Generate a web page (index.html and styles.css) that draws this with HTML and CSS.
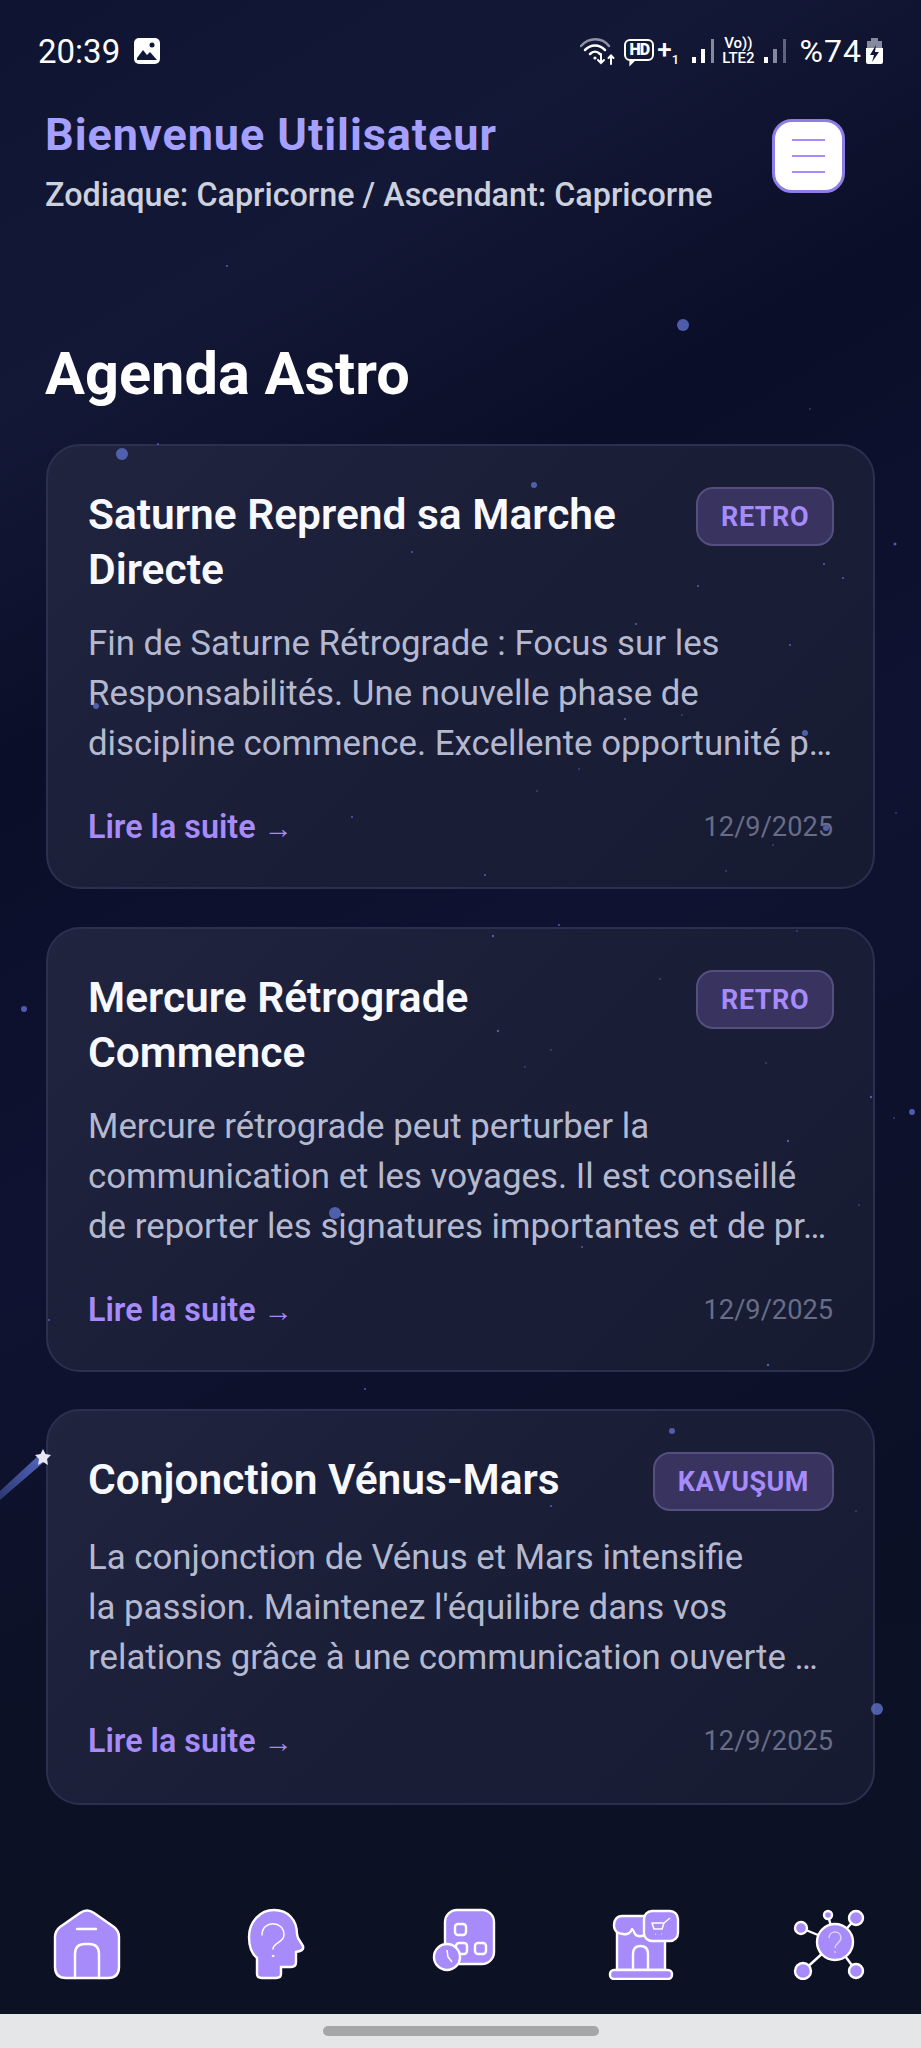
FILE: index.html
```html
<!DOCTYPE html>
<html lang="fr">
<head>
    <meta charset="UTF-8">
    <meta name="viewport" content="width=device-width, initial-scale=1.0">
    <title>Agenda Astro</title>
    <link rel="stylesheet" href="styles.css">
</head>
<body>

<div class="app">

    <div class="status-bar">
        <div class="status-left">
            <span class="clock">20:39</span>
            <svg class="gallery-icon" width="28" height="28" viewBox="0 0 28 28">
                <rect x="1" y="1" width="26" height="26" rx="5" fill="#fff"/>
                <path d="M4 21l6-8 4 5 3-3 7 8H4z" fill="#10153a"/>
                <circle cx="19" cy="8" r="2.5" fill="#10153a"/>
            </svg>
        </div>
        <div class="status-right">
            <svg width="36" height="28" viewBox="0 0 36 28" fill="none" stroke="#fff" stroke-linecap="round">
                <path d="M1 9C9 0 22 0 29 9" stroke="#8f93a5" stroke-width="2.5"/>
                <path d="M5 13C11 7 19 7 25 13" stroke-width="2.5"/>
                <path d="M10 17C13 14 17 14 20 17" stroke-width="2.5"/>
                <circle cx="15" cy="21" r="1.6" fill="#fff" stroke="none"/>
                <path d="M21 17v9M18 23l3 3 3-3" stroke-width="2"/>
                <path d="M31 27v-8M28.500 21l2.500-2.500 2.500 2.500" stroke-width="2"/>
            </svg>
            <span class="hd-box">HD</span>
            <span class="hd-plus">+<sub>1</sub></span>
            <svg class="signal" width="25" height="26" viewBox="0 0 25 26">
                <rect x="1" y="19" width="4" height="6" fill="#fff"/>
                <rect x="10" y="11" width="4" height="14" fill="#fff"/>
                <rect x="20" y="1" width="3" height="24" fill="#858a9e"/>
            </svg>
            <span class="volte">Vo))<br>LTE2</span>
            <svg class="signal" width="25" height="26" viewBox="0 0 25 26">
                <rect x="1" y="19" width="4" height="6" fill="#fff"/>
                <rect x="10" y="11" width="4" height="14" fill="#858a9e"/>
                <rect x="20" y="1" width="3" height="24" fill="#5f647c"/>
            </svg>
            <span class="battery-text">%74</span>
            <svg width="19" height="28" viewBox="0 0 19 28">
                <path d="M6 1h7v3H6zM2 4h15v8H2z" fill="#858a9e"/>
                <path d="M1 11h17v14a2 2 0 0 1-2 2H3a2 2 0 0 1-2-2z" fill="#fff"/>
                <path d="M11 8l-6 10h4l-2 7 7-10h-4z" fill="#10153a"/>
            </svg>
        </div>
    </div>

    <header class="top-header">
        <div>
            <h2 class="welcome">Bienvenue Utilisateur</h2>
            <p class="sign-line">Zodiaque: Capricorne / Ascendant: Capricorne</p>
        </div>
        <button class="menu-btn" type="button">
            <span></span>
            <span></span>
            <span></span>
        </button>
    </header>

    <main class="content">
        <h1 class="page-title">Agenda Astro</h1>

        <article class="card">
            <div class="card-head">
                <h3>Saturne Reprend sa Marche Directe</h3>
                <span class="badge">RETRO</span>
            </div>
            <p class="card-text">Fin de Saturne Rétrograde : Focus sur les Responsabilités. Une nouvelle phase de discipline commence. Excellente opportunité p…</p>
            <div class="card-foot">
                <a class="read-more" href="#">Lire la suite <span class="arrow">→</span></a>
                <span class="date">12/9/2025</span>
            </div>
        </article>

        <article class="card">
            <div class="card-head">
                <h3>Mercure Rétrograde Commence</h3>
                <span class="badge">RETRO</span>
            </div>
            <p class="card-text">Mercure rétrograde peut perturber la communication et les voyages. Il est conseillé de reporter les signatures importantes et de pr…</p>
            <div class="card-foot">
                <a class="read-more" href="#">Lire la suite <span class="arrow">→</span></a>
                <span class="date">12/9/2025</span>
            </div>
        </article>

        <article class="card">
            <div class="card-head">
                <h3>Conjonction Vénus-Mars</h3>
                <span class="badge">KAVUŞUM</span>
            </div>
            <p class="card-text">La conjonction de Vénus et Mars intensifie<br>la passion. Maintenez l'équilibre dans vos relations grâce à une communication ouverte …</p>
            <div class="card-foot">
                <a class="read-more" href="#">Lire la suite <span class="arrow">→</span></a>
                <span class="date">12/9/2025</span>
            </div>
        </article>
    </main>

    <nav class="bottom-nav">
        <a href="#">
            <svg width="80" height="72" viewBox="0 0 80 72" fill="#a78bfa" stroke="#fff" stroke-width="2.400" stroke-linecap="round">
                <path d="M28 5Q35 0 42 5L62 19Q67 23 67 29V59Q67 70 56 70H14Q3 70 3 59V29Q3 23 8 19Z"/>
                <path d="M25 21H44" fill="none"/>
                <path d="M23 70V46Q23 36 33 36H37Q47 36 47 46V70" fill="none"/>
            </svg>
        </a>
        <a href="#">
            <svg width="80" height="72" viewBox="0 0 80 72" fill="#a78bfa" stroke="#fff" stroke-width="2.400" stroke-linecap="round">
                <path d="M21 50C15 45 13 36 13 29C13 14 24 2 38 2C52 2 61 12 61 26L62 30L67 38Q68 42 64 43L60 44V54Q60 59 55 59H45V66Q45 70 40 70H26Q21 70 21 66Z"/>
                <path d="M26 27C26 12 48 12 48 27C48 35 37 34 37 41" fill="none" stroke-width="1.500"/>
                <circle cx="37" cy="48" r="0.800" fill="#fff" stroke-width="1"/>
            </svg>
        </a>
        <a href="#">
            <svg width="80" height="72" viewBox="0 0 80 72" fill="#a78bfa" stroke="#fff" stroke-width="2.400">
                <rect x="25" y="2" width="49" height="54" rx="12"/>
                <rect x="35" y="16" width="11" height="11" rx="3"/>
                <rect x="36" y="35" width="11" height="11" rx="3"/>
                <rect x="55" y="35" width="11" height="11" rx="3"/>
                <circle cx="27" cy="49" r="13"/>
                <path d="M27 42L28 49L32 54" fill="none" stroke-width="1.500"/>
            </svg>
        </a>
        <a href="#">
            <svg width="80" height="72" viewBox="0 0 80 72" fill="#a78bfa" stroke="#fff" stroke-width="2.400" stroke-linejoin="round">
                <path d="M12 22V62H60V28"/>
                <path d="M17 8H48V26L40 26C38 29 32 29 30 26C29 24 28 22 27 21C26 25 22 27 18 26C14 26 9 24 9 17C9 12 12 8 17 8Z"/>
                <path d="M28 62V46Q28 38 35.500 38Q43 38 43 46V62" fill="none"/>
                <rect x="5" y="62" width="62" height="9" rx="4"/>
                <rect x="39" y="3" width="34" height="30" rx="8"/>
                <path d="M47 15H59L57 21H49ZM59 15L65 10" fill="none" stroke-width="1.500"/>
                <path d="M50 26H50.500M56 26H56.500" stroke-width="1.500"/>
            </svg>
        </a>
        <a href="#">
            <svg width="80" height="72" viewBox="0 0 80 72" fill="#a78bfa" stroke="#fff" stroke-width="2.400">
                <path d="M46 34L12 20M46 34L39 7M46 34L67 10M46 34L14 63M46 34L67 63" fill="none"/>
                <circle cx="46" cy="34" r="18"/>
                <circle cx="12" cy="20" r="6"/>
                <circle cx="39" cy="7" r="4"/>
                <circle cx="67" cy="10" r="7"/>
                <circle cx="14" cy="63" r="8"/>
                <circle cx="67" cy="63" r="7"/>
                <path d="M40 30C40 22 52 22 52 30C52 35 46 35 46 40" fill="none" stroke="#ddd3ff" stroke-width="1.500"/>
                <circle cx="46" cy="44" r="0.600" stroke="#ddd3ff" stroke-width="1"/>
            </svg>
        </a>
    </nav>

    <div class="gesture-bar"><span></span></div>

    <svg class="sky" width="921" height="2048" viewBox="0 0 921 2048">
        <defs>
            <linearGradient id="tail" x1="0" y1="1" x2="1" y2="0">
                <stop offset="0" stop-color="#4d5fb4" stop-opacity="0.500"/>
                <stop offset="1" stop-color="#5568c4"/>
            </linearGradient>
        </defs>
        <g class="stars">
            <circle cx="683" cy="325" r="6"/>
            <circle cx="122" cy="454" r="6"/>
            <circle cx="534" cy="485" r="3"/>
            <circle cx="96" cy="706" r="3"/>
            <circle cx="805" cy="733" r="3"/>
            <circle cx="826" cy="828" r="3"/>
            <circle cx="24" cy="1009" r="3"/>
            <circle cx="912" cy="1112" r="3"/>
            <circle cx="335" cy="1213" r="6"/>
            <circle cx="672" cy="1431" r="3"/>
            <circle cx="877" cy="1709" r="6"/>
            <circle cx="297" cy="1553" r="2"/>
            <circle cx="227" cy="266" r="1"/>
            <circle cx="810" cy="409" r="0.800"/>
            <circle cx="158" cy="444" r="1"/>
            <circle cx="412" cy="552" r="1"/>
            <circle cx="895" cy="544" r="1.500"/>
            <circle cx="824" cy="564" r="1"/>
            <circle cx="843" cy="578" r="1"/>
            <circle cx="698" cy="586" r="1"/>
            <circle cx="636" cy="624" r="1"/>
            <circle cx="790" cy="645" r="1"/>
            <circle cx="625" cy="719" r="1"/>
            <circle cx="682" cy="715" r="0.800"/>
            <circle cx="579" cy="769" r="0.800"/>
            <circle cx="537" cy="791" r="0.800"/>
            <circle cx="352" cy="817" r="1"/>
            <circle cx="896" cy="813" r="0.800"/>
            <circle cx="773" cy="845" r="0.800"/>
            <circle cx="726" cy="871" r="0.800"/>
            <circle cx="485" cy="875" r="1"/>
            <circle cx="559" cy="925" r="1"/>
            <circle cx="493" cy="936" r="1.200"/>
            <circle cx="797" cy="931" r="0.800"/>
            <circle cx="660" cy="979" r="0.800"/>
            <circle cx="498" cy="1031" r="1.200"/>
            <circle cx="551" cy="1050" r="0.800"/>
            <circle cx="525" cy="1067" r="0.800"/>
            <circle cx="766" cy="1063" r="0.800"/>
            <circle cx="871" cy="1097" r="1.200"/>
            <circle cx="894" cy="1118" r="0.800"/>
            <circle cx="788" cy="1141" r="1.200"/>
            <circle cx="859" cy="1205" r="0.800"/>
            <circle cx="582" cy="1247" r="1"/>
            <circle cx="49" cy="1320" r="1"/>
            <circle cx="768" cy="1365" r="1.200"/>
            <circle cx="365" cy="1389" r="1"/>
            <circle cx="551" cy="1506" r="1"/>
            <circle cx="856" cy="1511" r="0.800"/>
        </g>
        <polygon points="0,1491 38,1456 44,1462 0,1500" fill="url(#tail)"/>
        <polygon points="43,1449 45.500,1454 51,1455 47,1459 48,1465 43,1462 38,1465 39,1459 35,1455 40.500,1454" fill="#e6e8f5"/>
    </svg>

</div>

</body>
</html>
```

FILE: styles.css
```css
* {
    box-sizing: border-box;
}

html, body {
    margin: 0;
    padding: 0;
}

body {
    font-family: Roboto, "Noto Sans", sans-serif;
    background: #0b1024;
}

.app {
    position: relative;
    width: 921px;
    height: 2048px;
    overflow: hidden;
    display: flex;
    flex-direction: column;
    background:
        linear-gradient(180deg, rgba(11, 16, 36, 0) 70%, #0c1124 92%),
        linear-gradient(150deg, #0f1433 0%, #131836 16%, #0a0e28 30%, #0f1331 48%, #0c1028 72%, #0b1024 100%);
}

/* status bar */
.status-bar {
    height: 102px;
    padding: 0 37px 0 38px;
    display: flex;
    justify-content: space-between;
    align-items: center;
    color: #fff;
}

.status-left {
    display: flex;
    align-items: center;
    gap: 13px;
}

.clock {
    font-size: 33px;
    line-height: 1;
}

.status-right {
    display: flex;
    align-items: center;
}

.hd-box {
    position: relative;
    margin-left: 8px;
    width: 30px;
    height: 22px;
    margin-top: -3px;
    border: 2px solid #fff;
    border-radius: 6px;
    font-size: 16px;
    font-weight: 900;
    line-height: 18px;
    text-align: center;
    letter-spacing: -1px;
}

.hd-box::after {
    content: "";
    position: absolute;
    left: 3px;
    bottom: -8px;
    width: 7px;
    height: 7px;
    background-color: #fff;
    clip-path: polygon(0 0, 100% 0, 0 100%);
}

.hd-plus {
    margin-left: 3px;
    font-size: 26px;
    font-weight: 500;
    line-height: 1;
}

.hd-plus sub {
    font-size: 13px;
    vertical-align: -6px;
}

.signal {
    margin-left: 12px;
}

.volte {
    margin-left: 6px;
    font-size: 15px;
    font-weight: 500;
    line-height: 15px;
    text-align: center;
}

.status-right .signal + .volte + .signal {
    margin-left: 8px;
}

.battery-text {
    margin-left: 12px;
    font-size: 32px;
    line-height: 1;
    letter-spacing: 1px;
}

.battery-text + svg {
    margin-left: 3px;
}

/* header */
.top-header {
    height: 122px;
    margin-top: 8px;
    padding: 0 76px 0 45px;
    display: flex;
    justify-content: space-between;
    align-items: flex-start;
}

.welcome {
    margin: 0;
    font-size: 45px;
    font-weight: 700;
    line-height: 50px;
    letter-spacing: 0.950px;
    color: #a5a0ff;
}

.sign-line {
    margin: 17px 0 0;
    font-size: 32.300px;
    font-weight: 500;
    line-height: 36px;
    color: #cdd1de;
}

.menu-btn {
    margin-top: 9px;
    width: 73px;
    height: 74px;
    padding: 0;
    background-color: #fff;
    border: 3px solid #8d7de6;
    border-radius: 20px;
    display: flex;
    flex-direction: column;
    justify-content: center;
    align-items: center;
    gap: 13.500px;
}

.menu-btn span {
    width: 33px;
    height: 2.500px;
    background-color: #a78bfa;
}

/* cards */
.content {
    flex: 1;
    padding: 0 46px 0 46px;
}

.page-title {
    margin: 107px 0 0 -1px;
    font-size: 59.500px;
    font-weight: 700;
    line-height: 70px;
    color: #fff;
}

.card {
    height: 445px;
    margin-top: 38px;
    padding: 41px 40px 0 40px;
    border: 2px solid #2b3050;
    border-radius: 34px;
    background: linear-gradient(135deg, #20243f 0%, #1a1e37 45%, #171b32 100%);
    display: flex;
    flex-direction: column;
}

.card:nth-of-type(1) {
    margin-top: 35px;
}

.card:last-child {
    height: 396px;
    margin-top: 37px;
}

.card-head {
    display: flex;
    justify-content: space-between;
    align-items: flex-start;
    gap: 40px;
}

.card-head h3 {
    margin: 0;
    font-size: 42.500px;
    font-weight: 600;
    line-height: 55px;
    color: #f8f8ff;
}

.badge {
    flex-shrink: 0;
    margin-right: -1px;
    padding: 0 23px;
    height: 59px;
    border: 2px solid #544f80;
    border-radius: 17px;
    background-color: #38335f;
    font-size: 27px;
    font-weight: 700;
    line-height: 57px;
    letter-spacing: 0.500px;
    color: #a78bfa;
}

.card-text {
    margin: 21px 0 0;
    font-size: 34.800px;
    line-height: 50px;
    color: #b5b9d0;
}

.card-foot {
    margin-top: 39px;
    display: flex;
    justify-content: space-between;
    align-items: center;
}

.read-more {
    font-size: 32.300px;
    font-weight: 600;
    line-height: 40px;
    color: #a78bfa;
    text-decoration: none;
}

.arrow {
    font-size: 29px;
    font-weight: 700;
}

.date {
    margin-top: -2px;
    font-size: 27.200px;
    color: #686d85;
}

/* bottom navigation */
.bottom-nav {
    height: 128px;
    padding-top: 22px;
    background-color: #0c1124;
    display: grid;
    grid-template-columns: repeat(5, 1fr);
    justify-items: center;
    align-items: start;
}

.bottom-nav svg {
    display: block;
}

.gesture-bar {
    height: 34px;
    padding-top: 12px;
    background-color: #e5e6e8;
    display: flex;
    justify-content: center;
}

.gesture-bar span {
    width: 276px;
    height: 10px;
    border-radius: 5px;
    background-color: #a5a6a8;
}

/* stars drawn over the whole screen */
.sky {
    position: absolute;
    top: 0;
    left: 0;
    pointer-events: none;
}

.stars circle {
    fill: #5a6bc0;
    opacity: 0.85;
}
```
